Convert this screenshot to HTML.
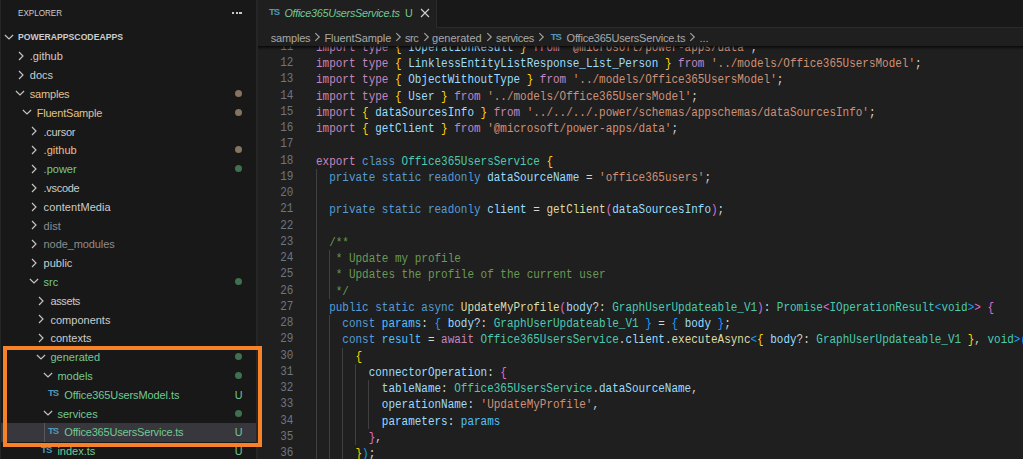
<!DOCTYPE html>
<html><head><meta charset="utf-8">
<style>

*{margin:0;padding:0;box-sizing:border-box}
html,body{width:1023px;height:459px;overflow:hidden;background:#1f1f1f}
body{position:relative;font-family:"Liberation Sans",sans-serif;color:#cccccc}
.a{position:absolute;white-space:pre}
#side{position:absolute;left:0;top:0;width:256px;height:459px;background:#181818;overflow:hidden}
#sideb{position:absolute;left:256px;top:0;width:1.5px;height:459px;background:#262626}
#actb{position:absolute;left:0;top:0;width:1px;height:459px;background:#262626}
.row{position:absolute;left:0;width:256px;height:18.8px;line-height:18.8px;font-size:11px}
.row .t{position:absolute;top:0}
.chev{position:absolute}
.dot{position:absolute;left:235px;width:7px;height:7px;border-radius:50%}
.U{position:absolute;left:234.7px;top:0;font-size:10.8px}
.mod{color:#e2c08d}.unt{color:#73c991}.ign{color:#8c8c8c}
.dm{background:#85745f}.du{background:#3f7050}
.ts{position:absolute;font-weight:700;color:#519aba;font-size:9.5px;letter-spacing:-1px}
#tabs{position:absolute;left:257px;top:0;width:766px;height:28px;background:#181818;border-bottom:1px solid #2b2b2b}
#tab{position:absolute;left:257px;top:0;width:180px;height:28px;background:#1f1f1f;border-right:1px solid #2b2b2b}
#crumb{position:absolute;left:257px;top:28px;width:766px;height:17.8px;background:#1f1f1f;font-size:11px;line-height:18.5px;color:#a9a9a9}
#shadow{position:absolute;left:257px;top:45.8px;width:766px;height:4px;background:linear-gradient(rgba(0,0,0,0.75),rgba(0,0,0,0.35) 40%,rgba(0,0,0,0))}
#code{position:absolute;left:257px;top:0;width:766px;height:459px;font-family:"Liberation Mono",monospace;font-size:10.97px}
.ln{position:absolute;left:0;width:36.3px;text-align:right;color:#6e7681;height:16.23px;line-height:16.23px;font-size:12px;transform:scaleX(0.914) translateY(-0.5px);transform-origin:100% 0}
.cl{position:absolute;white-space:pre;left:58.5px;height:16.23px;line-height:16.23px;color:#cccccc;font-size:12px;transform:scaleX(0.914) translateY(0.6px);transform-origin:0 0}
.g{position:absolute;width:1px;background:#404040}
.k{color:#c586c0}.s{color:#569cd6}.v{color:#9cdcfe}.c{color:#4fc1ff}.ty{color:#4ec9b0}.f{color:#dcdcaa}.st{color:#ce9178}.cm{color:#6a9955}.p{color:#d4d4d4}
.b1{color:#ffd700}.b2{color:#da70d6}.b3{color:#179fff}
#box{position:absolute;left:3px;top:346px;width:259px;height:101px;border:4px solid #f7822a}

</style></head><body>
<div id="code"><div class="ln" style="top:38.75px">11</div><div class="cl" style="top:38.75px"><span class="k">import</span><span class="p"> </span><span class="k">type</span><span class="p"> </span><span class="b1">{</span><span class="p"> </span><span class="v">IOperationResult</span><span class="p"> </span><span class="b1">}</span><span class="p"> </span><span class="k">from</span><span class="p"> </span><span class="st">'@microsoft/power-apps/data'</span><span class="p">;</span></div><div class="ln" style="top:55.00px">12</div><div class="cl" style="top:55.00px"><span class="k">import</span><span class="p"> </span><span class="k">type</span><span class="p"> </span><span class="b1">{</span><span class="p"> </span><span class="v">LinklessEntityListResponse_List_Person</span><span class="p"> </span><span class="b1">}</span><span class="p"> </span><span class="k">from</span><span class="p"> </span><span class="st">'../models/Office365UsersModel'</span><span class="p">;</span></div><div class="ln" style="top:71.25px">13</div><div class="cl" style="top:71.25px"><span class="k">import</span><span class="p"> </span><span class="k">type</span><span class="p"> </span><span class="b1">{</span><span class="p"> </span><span class="v">ObjectWithoutType</span><span class="p"> </span><span class="b1">}</span><span class="p"> </span><span class="k">from</span><span class="p"> </span><span class="st">'../models/Office365UsersModel'</span><span class="p">;</span></div><div class="ln" style="top:87.50px">14</div><div class="cl" style="top:87.50px"><span class="k">import</span><span class="p"> </span><span class="k">type</span><span class="p"> </span><span class="b1">{</span><span class="p"> </span><span class="v">User</span><span class="p"> </span><span class="b1">}</span><span class="p"> </span><span class="k">from</span><span class="p"> </span><span class="st">'../models/Office365UsersModel'</span><span class="p">;</span></div><div class="ln" style="top:103.75px">15</div><div class="cl" style="top:103.75px"><span class="k">import</span><span class="p"> </span><span class="b1">{</span><span class="p"> </span><span class="v">dataSourcesInfo</span><span class="p"> </span><span class="b1">}</span><span class="p"> </span><span class="k">from</span><span class="p"> </span><span class="st">'../../../.power/schemas/appschemas/dataSourcesInfo'</span><span class="p">;</span></div><div class="ln" style="top:120.00px">16</div><div class="cl" style="top:120.00px"><span class="k">import</span><span class="p"> </span><span class="b1">{</span><span class="p"> </span><span class="v">getClient</span><span class="p"> </span><span class="b1">}</span><span class="p"> </span><span class="k">from</span><span class="p"> </span><span class="st">'@microsoft/power-apps/data'</span><span class="p">;</span></div><div class="ln" style="top:136.25px">17</div><div class="ln" style="top:152.50px">18</div><div class="cl" style="top:152.50px"><span class="k">export</span><span class="p"> </span><span class="s">class</span><span class="p"> </span><span class="ty">Office365UsersService</span><span class="p"> </span><span class="b1">{</span></div><div class="ln" style="top:168.75px">19</div><div class="cl" style="top:168.75px"><span class="p">  </span><span class="s">private</span><span class="p"> </span><span class="s">static</span><span class="p"> </span><span class="s">readonly</span><span class="p"> </span><span class="v">dataSourceName</span><span class="p"> = </span><span class="st">'office365users'</span><span class="p">;</span></div><div class="ln" style="top:185.00px">20</div><div class="ln" style="top:201.25px">21</div><div class="cl" style="top:201.25px"><span class="p">  </span><span class="s">private</span><span class="p"> </span><span class="s">static</span><span class="p"> </span><span class="s">readonly</span><span class="p"> </span><span class="v">client</span><span class="p"> = </span><span class="f">getClient</span><span class="b2">(</span><span class="v">dataSourcesInfo</span><span class="b2">)</span><span class="p">;</span></div><div class="ln" style="top:217.50px">22</div><div class="ln" style="top:233.75px">23</div><div class="cl" style="top:233.75px"><span class="p">  </span><span class="cm">/**</span></div><div class="ln" style="top:250.00px">24</div><div class="cl" style="top:250.00px"><span class="p">   </span><span class="cm">* Update my profile</span></div><div class="ln" style="top:266.25px">25</div><div class="cl" style="top:266.25px"><span class="p">   </span><span class="cm">* Updates the profile of the current user</span></div><div class="ln" style="top:282.50px">26</div><div class="cl" style="top:282.50px"><span class="p">   </span><span class="cm">*/</span></div><div class="ln" style="top:298.75px">27</div><div class="cl" style="top:298.75px"><span class="p">  </span><span class="s">public</span><span class="p"> </span><span class="s">static</span><span class="p"> </span><span class="s">async</span><span class="p"> </span><span class="f">UpdateMyProfile</span><span class="b2">(</span><span class="v">body</span><span class="p">?: </span><span class="ty">GraphUserUpdateable_V1</span><span class="b2">)</span><span class="p">: </span><span class="ty">Promise</span><span class="b2">&lt;</span><span class="ty">IOperationResult</span><span class="b3">&lt;</span><span class="ty">void</span><span class="b3">&gt;</span><span class="b2">&gt;</span><span class="p"> </span><span class="b2">{</span></div><div class="ln" style="top:315.00px">28</div><div class="cl" style="top:315.00px"><span class="p">    </span><span class="s">const</span><span class="p"> </span><span class="c">params</span><span class="p">: </span><span class="b3">{</span><span class="p"> </span><span class="v">body</span><span class="p">?: </span><span class="ty">GraphUserUpdateable_V1</span><span class="p"> </span><span class="b3">}</span><span class="p"> = </span><span class="b3">{</span><span class="p"> </span><span class="v">body</span><span class="p"> </span><span class="b3">}</span><span class="p">;</span></div><div class="ln" style="top:331.25px">29</div><div class="cl" style="top:331.25px"><span class="p">    </span><span class="s">const</span><span class="p"> </span><span class="c">result</span><span class="p"> = </span><span class="k">await</span><span class="p"> </span><span class="ty">Office365UsersService</span><span class="p">.</span><span class="v">client</span><span class="p">.</span><span class="f">executeAsync</span><span class="b3">&lt;</span><span class="b1">{</span><span class="p"> </span><span class="v">body</span><span class="p">?: </span><span class="ty">GraphUserUpdateable_V1</span><span class="p"> </span><span class="b1">}</span><span class="p">, </span><span class="ty">void</span><span class="b3">&gt;</span><span class="b3">(</span></div><div class="ln" style="top:347.50px">30</div><div class="cl" style="top:347.50px"><span class="p">      </span><span class="b1">{</span></div><div class="ln" style="top:363.75px">31</div><div class="cl" style="top:363.75px"><span class="p">        </span><span class="v">connectorOperation</span><span class="p">: </span><span class="b2">{</span></div><div class="ln" style="top:380.00px">32</div><div class="cl" style="top:380.00px"><span class="p">          </span><span class="v">tableName</span><span class="p">: </span><span class="ty">Office365UsersService</span><span class="p">.</span><span class="v">dataSourceName</span><span class="p">,</span></div><div class="ln" style="top:396.25px">33</div><div class="cl" style="top:396.25px"><span class="p">          </span><span class="v">operationName</span><span class="p">: </span><span class="st">'UpdateMyProfile'</span><span class="p">,</span></div><div class="ln" style="top:412.50px">34</div><div class="cl" style="top:412.50px"><span class="p">          </span><span class="v">parameters</span><span class="p">: </span><span class="c">params</span></div><div class="ln" style="top:428.75px">35</div><div class="cl" style="top:428.75px"><span class="p">        </span><span class="b2">}</span><span class="p">,</span></div><div class="ln" style="top:445.00px">36</div><div class="cl" style="top:445.00px"><span class="p">      </span><span class="b1">}</span><span class="b3">)</span><span class="p">;</span></div><div class="g" style="left:58.50px;top:168.75px;height:292.50px"></div><div class="g" style="left:71.66px;top:250.00px;height:48.75px"></div><div class="g" style="left:71.66px;top:315.00px;height:146.25px"></div><div class="g" style="left:84.83px;top:347.50px;height:113.75px"></div><div class="g" style="left:97.99px;top:363.75px;height:81.25px"></div><div class="g" style="left:111.16px;top:380.00px;height:48.75px"></div></div>
<div id="tabs"></div>
<div id="tab"><span class="ts" style="left:12px;top:-2px;line-height:27px">TS</span><span class="a unt" style="left:27.40px;top:0;line-height:27px;font-size:10.8px;font-style:italic;letter-spacing:-0.27px">Office365UsersService.ts</span><span class="a unt" style="left:147.90px;top:0;line-height:27px;font-size:10.8px">U</span><svg style="position:absolute;left:162.7px;top:7.5px" width="10" height="10" viewBox="0 0 10 10"><path d="M1 1 L9 9 M9 1 L1 9" stroke="#d0d0d0" stroke-width="1.1" fill="none"/></svg></div>
<div id="crumb"><span class="a" style="left:13.80px;top:0.7px;letter-spacing:-0.2px">samples</span><span class="a" style="left:67.50px;top:0.7px;letter-spacing:-0.1px">FluentSample</span><span class="a" style="left:147.90px;top:0.7px;letter-spacing:-0.4px">src</span><span class="a" style="left:175.10px;top:0.7px;letter-spacing:0px">generated</span><span class="a" style="left:239.00px;top:0.7px;letter-spacing:-0.3px">services</span><svg style="position:absolute;left:57.40px;top:4px" width="7" height="10" viewBox="0 0 7 10"><path d="M1.3 1.2 L5.3 5 L1.3 8.8" fill="none" stroke="#a9a9a9" stroke-width="1.05"/></svg><svg style="position:absolute;left:138.20px;top:4px" width="7" height="10" viewBox="0 0 7 10"><path d="M1.3 1.2 L5.3 5 L1.3 8.8" fill="none" stroke="#a9a9a9" stroke-width="1.05"/></svg><svg style="position:absolute;left:165.60px;top:4px" width="7" height="10" viewBox="0 0 7 10"><path d="M1.3 1.2 L5.3 5 L1.3 8.8" fill="none" stroke="#a9a9a9" stroke-width="1.05"/></svg><svg style="position:absolute;left:229.10px;top:4px" width="7" height="10" viewBox="0 0 7 10"><path d="M1.3 1.2 L5.3 5 L1.3 8.8" fill="none" stroke="#a9a9a9" stroke-width="1.05"/></svg><svg style="position:absolute;left:280.50px;top:4px" width="7" height="10" viewBox="0 0 7 10"><path d="M1.3 1.2 L5.3 5 L1.3 8.8" fill="none" stroke="#a9a9a9" stroke-width="1.05"/></svg><svg style="position:absolute;left:432.00px;top:4px" width="7" height="10" viewBox="0 0 7 10"><path d="M1.3 1.2 L5.3 5 L1.3 8.8" fill="none" stroke="#a9a9a9" stroke-width="1.05"/></svg><span class="ts" style="left:293.80px;top:0.3px;line-height:18.5px">TS</span><span class="a" style="left:309.60px;top:0.7px;letter-spacing:-0.22px">Office365UsersService.ts</span><span class="a" style="left:442.50px;top:0.7px">...</span></div>
<div id="shadow"></div>
<div id="side"><div class="a" style="left:17.7px;top:4px;font-size:9.5px;line-height:18px;transform:scaleX(0.85);transform-origin:0 0;color:#cccccc">EXPLORER</div><div style="position:absolute;left:232.1px;top:11.8px;width:2.4px;height:2.4px;background:#c8c8c8"></div><div style="position:absolute;left:235.7px;top:11.8px;width:2.4px;height:2.4px;background:#c8c8c8"></div><div style="position:absolute;left:239.3px;top:11.8px;width:2.4px;height:2.4px;background:#c8c8c8"></div><svg class="chev" style="left:3.35px;top:31.20px" width="12" height="12" viewBox="0 0 12 12"><path d="M1.9 4.0 L6 8.0 L10.1 4.0" fill="none" stroke="#c5c5c5" stroke-width="1.15"/></svg><div class="a" style="left:18.2px;top:28px;font-size:9.7px;line-height:18px;font-weight:700;transform:scaleX(0.895);transform-origin:0 0;color:#cccccc">POWERAPPSCODEAPPS</div><div class="row" style="top:47.10px;"><svg class="chev" style="left:14.60px;top:3.10px" width="12" height="12" viewBox="0 0 12 12"><path d="M4.0 2.0 L8.0 6 L4.0 10.0" fill="none" stroke="#c5c5c5" stroke-width="1.15"/></svg><span class="t " style="left:29.80px;top:0.3px;letter-spacing:0px">.github</span></div><div class="row" style="top:65.90px;"><svg class="chev" style="left:14.60px;top:3.10px" width="12" height="12" viewBox="0 0 12 12"><path d="M4.0 2.0 L8.0 6 L4.0 10.0" fill="none" stroke="#c5c5c5" stroke-width="1.15"/></svg><span class="t " style="left:29.80px;top:0.3px;letter-spacing:0px">docs</span></div><div class="row" style="top:84.70px;"><svg class="chev" style="left:14.25px;top:2.80px" width="12" height="12" viewBox="0 0 12 12"><path d="M1.9 4.0 L6 8.0 L10.1 4.0" fill="none" stroke="#c5c5c5" stroke-width="1.15"/></svg><span class="t mod" style="left:29.80px;top:0.3px;letter-spacing:-0.2px">samples</span><span class="dot dm" style="top:5.3px"></span></div><div class="row" style="top:103.50px;"><svg class="chev" style="left:21.15px;top:2.80px" width="12" height="12" viewBox="0 0 12 12"><path d="M1.9 4.0 L6 8.0 L10.1 4.0" fill="none" stroke="#c5c5c5" stroke-width="1.15"/></svg><span class="t mod" style="left:36.70px;top:0.3px;letter-spacing:-0.2px">FluentSample</span><span class="dot dm" style="top:5.3px"></span></div><div class="row" style="top:122.30px;"><svg class="chev" style="left:28.40px;top:3.10px" width="12" height="12" viewBox="0 0 12 12"><path d="M4.0 2.0 L8.0 6 L4.0 10.0" fill="none" stroke="#c5c5c5" stroke-width="1.15"/></svg><span class="t " style="left:43.60px;top:0.3px;letter-spacing:-0.3px">.cursor</span></div><div class="row" style="top:141.10px;"><svg class="chev" style="left:28.40px;top:3.10px" width="12" height="12" viewBox="0 0 12 12"><path d="M4.0 2.0 L8.0 6 L4.0 10.0" fill="none" stroke="#c5c5c5" stroke-width="1.15"/></svg><span class="t mod" style="left:43.60px;top:0.3px;letter-spacing:0px">.github</span><span class="dot dm" style="top:5.3px"></span></div><div class="row" style="top:159.90px;"><svg class="chev" style="left:28.40px;top:3.10px" width="12" height="12" viewBox="0 0 12 12"><path d="M4.0 2.0 L8.0 6 L4.0 10.0" fill="none" stroke="#c5c5c5" stroke-width="1.15"/></svg><span class="t unt" style="left:43.60px;top:0.3px;letter-spacing:0px">.power</span><span class="dot du" style="top:5.3px"></span></div><div class="row" style="top:178.70px;"><svg class="chev" style="left:28.40px;top:3.10px" width="12" height="12" viewBox="0 0 12 12"><path d="M4.0 2.0 L8.0 6 L4.0 10.0" fill="none" stroke="#c5c5c5" stroke-width="1.15"/></svg><span class="t " style="left:43.60px;top:0.3px;letter-spacing:-0.3px">.vscode</span></div><div class="row" style="top:197.50px;"><svg class="chev" style="left:28.40px;top:3.10px" width="12" height="12" viewBox="0 0 12 12"><path d="M4.0 2.0 L8.0 6 L4.0 10.0" fill="none" stroke="#c5c5c5" stroke-width="1.15"/></svg><span class="t " style="left:43.60px;top:0.3px;letter-spacing:0.1px">contentMedia</span></div><div class="row" style="top:216.30px;"><svg class="chev" style="left:28.40px;top:3.10px" width="12" height="12" viewBox="0 0 12 12"><path d="M4.0 2.0 L8.0 6 L4.0 10.0" fill="none" stroke="#c5c5c5" stroke-width="1.15"/></svg><span class="t ign" style="left:43.60px;top:0.3px;letter-spacing:0px">dist</span></div><div class="row" style="top:235.10px;"><svg class="chev" style="left:28.40px;top:3.10px" width="12" height="12" viewBox="0 0 12 12"><path d="M4.0 2.0 L8.0 6 L4.0 10.0" fill="none" stroke="#c5c5c5" stroke-width="1.15"/></svg><span class="t ign" style="left:43.60px;top:0.3px;letter-spacing:-0.1px">node_modules</span></div><div class="row" style="top:253.90px;"><svg class="chev" style="left:28.40px;top:3.10px" width="12" height="12" viewBox="0 0 12 12"><path d="M4.0 2.0 L8.0 6 L4.0 10.0" fill="none" stroke="#c5c5c5" stroke-width="1.15"/></svg><span class="t " style="left:43.60px;top:0.3px;letter-spacing:0px">public</span></div><div class="row" style="top:272.70px;"><svg class="chev" style="left:28.05px;top:2.80px" width="12" height="12" viewBox="0 0 12 12"><path d="M1.9 4.0 L6 8.0 L10.1 4.0" fill="none" stroke="#c5c5c5" stroke-width="1.15"/></svg><span class="t unt" style="left:43.60px;top:0.3px;letter-spacing:0px">src</span><span class="dot du" style="top:5.3px"></span></div><div class="row" style="top:291.50px;"><svg class="chev" style="left:35.30px;top:3.10px" width="12" height="12" viewBox="0 0 12 12"><path d="M4.0 2.0 L8.0 6 L4.0 10.0" fill="none" stroke="#c5c5c5" stroke-width="1.15"/></svg><span class="t " style="left:50.50px;top:0.3px;letter-spacing:-0.4px">assets</span></div><div class="row" style="top:310.30px;"><svg class="chev" style="left:35.30px;top:3.10px" width="12" height="12" viewBox="0 0 12 12"><path d="M4.0 2.0 L8.0 6 L4.0 10.0" fill="none" stroke="#c5c5c5" stroke-width="1.15"/></svg><span class="t " style="left:50.50px;top:0.3px;letter-spacing:0px">components</span></div><div class="row" style="top:329.10px;"><svg class="chev" style="left:35.30px;top:3.10px" width="12" height="12" viewBox="0 0 12 12"><path d="M4.0 2.0 L8.0 6 L4.0 10.0" fill="none" stroke="#c5c5c5" stroke-width="1.15"/></svg><span class="t " style="left:50.50px;top:0.3px;letter-spacing:0px">contexts</span></div><div class="row" style="top:347.90px;"><svg class="chev" style="left:34.95px;top:2.80px" width="12" height="12" viewBox="0 0 12 12"><path d="M1.9 4.0 L6 8.0 L10.1 4.0" fill="none" stroke="#c5c5c5" stroke-width="1.15"/></svg><span class="t unt" style="left:50.50px;top:0.3px;letter-spacing:0px">generated</span><span class="dot du" style="top:5.3px"></span></div><div class="row" style="top:366.70px;"><svg class="chev" style="left:41.85px;top:2.80px" width="12" height="12" viewBox="0 0 12 12"><path d="M1.9 4.0 L6 8.0 L10.1 4.0" fill="none" stroke="#c5c5c5" stroke-width="1.15"/></svg><span class="t unt" style="left:57.40px;top:0.3px;letter-spacing:0px">models</span><span class="dot du" style="top:5.3px"></span></div><div class="row" style="top:385.50px;"><span class="ts" style="left:48.00px;top:-1.2px;line-height:18.8px">TS</span><span class="t unt" style="left:64.30px;top:0.3px;letter-spacing:-0.1px">Office365UsersModel.ts</span><span class="U unt">U</span></div><div class="row" style="top:404.30px;"><svg class="chev" style="left:41.85px;top:2.80px" width="12" height="12" viewBox="0 0 12 12"><path d="M1.9 4.0 L6 8.0 L10.1 4.0" fill="none" stroke="#c5c5c5" stroke-width="1.15"/></svg><span class="t unt" style="left:57.40px;top:0.3px;letter-spacing:0px">services</span><span class="dot du" style="top:5.3px"></span></div><div class="row" style="top:423.10px;background:#37373d;"><span class="ts" style="left:48.00px;top:-1.2px;line-height:18.8px">TS</span><span class="t unt" style="left:64.30px;top:0.3px;letter-spacing:-0.2px">Office365UsersService.ts</span><span class="U unt">U</span></div><div class="row" style="top:441.90px;"><span class="ts" style="left:41.10px;top:-1.2px;line-height:18.8px">TS</span><span class="t unt" style="left:57.40px;top:0.3px;letter-spacing:0px">index.ts</span><span class="U unt">U</span></div><div style="position:absolute;left:44.3px;top:423.10px;width:1px;height:18.8px;background:#585858"></div></div>
<div id="sideb"></div>
<div id="actb"></div>
<div id="box"></div>
</body></html>
